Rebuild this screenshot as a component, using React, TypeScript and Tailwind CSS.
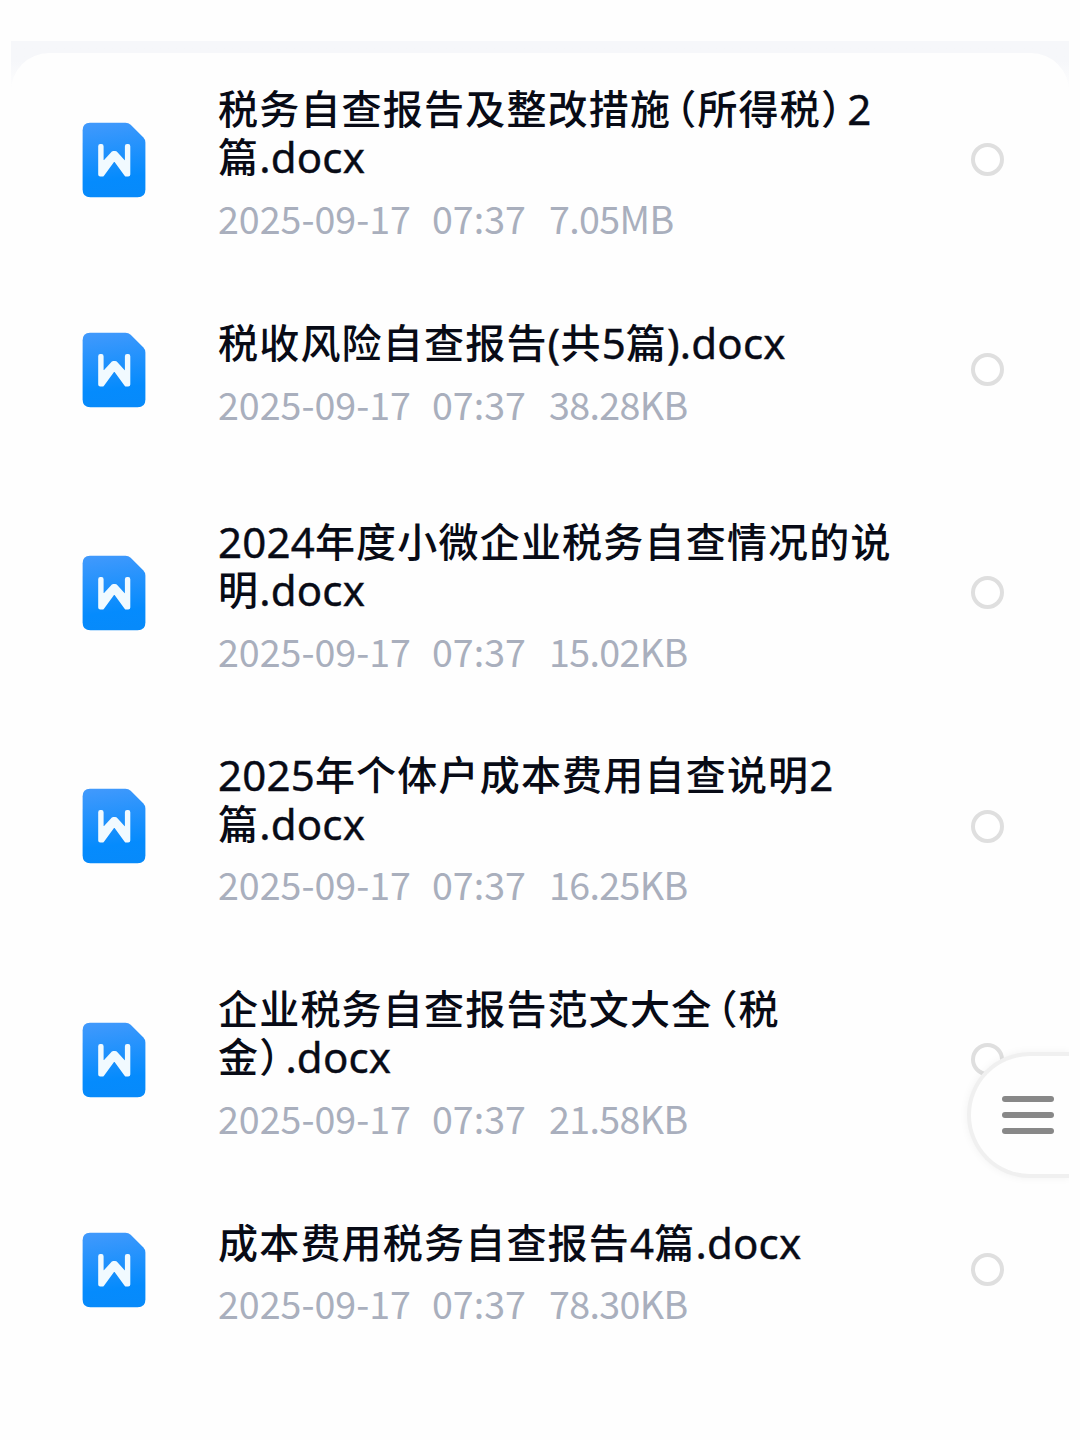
import { clsx } from 'clsx';

type FileItem = {
    lines: string[];
    date: string;
    time: string;
    size: string;
    className?: string;
};

const files: FileItem[] = [
    { lines: ['税务自查报告及整改措施（所得税）2', '篇.docx'], date: '2025-09-17', time: '07:37', size: '7.05MB' },
    { lines: ['税收风险自查报告(共5篇).docx'], date: '2025-09-17', time: '07:37', size: '38.28KB' },
    { lines: ['2024年度小微企业税务自查情况的说', '明.docx'], date: '2025-09-17', time: '07:37', size: '15.02KB', className: 'mt-[13px]' },
    { lines: ['2025年个体户成本费用自查说明2', '篇.docx'], date: '2025-09-17', time: '07:37', size: '16.25KB' },
    { lines: ['企业税务自查报告范文大全（税', '金）.docx'], date: '2025-09-17', time: '07:37', size: '21.58KB' },
    { lines: ['成本费用税务自查报告4篇.docx'], date: '2025-09-17', time: '07:37', size: '78.30KB' },
];

// Brackets use their half-width form, latin runs get their own size
function TitleLine({ text }: { text: string }) {
    const parts = text.match(/[（）]|[\x21-\x7e]+|[^（）\x21-\x7e]+/g) ?? [];

    return (
        <div className="flex h-[48.5px] leading-[48.5px] whitespace-nowrap">
            {parts.map((part, i) => (
                <span
                    key={i}
                    className={clsx(
                        part === '（' && "ml-[5px] [font-feature-settings:'halt']",
                        part === '）' && "mr-[5px] [font-feature-settings:'halt']",
                        /^[\x21-\x7e]/.test(part)
                            ? "pt-[2px] font-['Noto_Sans','Noto_Sans_CJK_SC',sans-serif] font-normal text-[42px] tracking-[0.2px] [-webkit-text-stroke:0.4px_#080b16]"
                            : "font-['Noto_Sans_CJK_SC',sans-serif] text-[40px] tracking-[1.2px]"
                    )}
                >
                    {part}
                </span>
            ))}
        </div>
    );
}

function WordIcon() {
    return (
        <svg className="w-16 h-[76px] shrink-0" viewBox="0 0 64 76" fill="none">
            <defs>
                <linearGradient id="doc" x1="24" y1="0" x2="34" y2="76" gradientUnits="userSpaceOnUse">
                    <stop stopColor="#4099fc" />
                    <stop offset="0.75" stopColor="#058bfd" />
                    <stop offset="1" stopColor="#078afa" />
                </linearGradient>
            </defs>
            <path
                d="M8 .7H43.5Q46.5.7 48.7 2.8L61.2 15.2Q63.4 17.4 63.4 20.5V67.5Q63.4 75.3 55.6 75.3H8.4Q.6 75.3.6 67.5V8.5Q.6.7 8 .7Z"
                fill="url(#doc)"
            />
            <path
                d="M18.3 24.2V52.5H20.3L32.3 36L44.3 52.5H46.2V24.2H45V44L33.2 31H31.4L19.5 44V24.2Z"
                fill="#f1faff"
                stroke="#f1faff"
                strokeWidth="4.2"
                strokeLinejoin="round"
            />
        </svg>
    );
}

function FileRow({ file }: { file: FileItem }) {
    return (
        <li className={clsx('flex items-center pl-[82px] pr-[76px]', file.lines.length > 1 ? 'h-[233.3px]' : 'h-[187px]', file.className)}>
            <WordIcon />
            <div className="flex-1 ml-[72px] -mt-[3px] flex flex-col gap-[23px]">
                <div className="font-medium text-[#080b16]">
                    {file.lines.map((line) => (
                        <TitleLine key={line} text={line} />
                    ))}
                </div>
                <div className="flex h-[31px] leading-[30px] font-['Noto_Sans_CJK_SC',sans-serif] text-[37.6px] text-[#a9afbd] whitespace-nowrap">
                    <span className="w-[214px]">{file.date}</span>
                    <span className="w-[117px]">{file.time}</span>
                    <span className="tracking-[-0.6px]">{file.size}</span>
                </div>
            </div>
            <span className="size-[33px] shrink-0 rounded-full border-4 border-[#dfdfdf] bg-white" />
        </li>
    );
}

export default function App() {
    return (
        <div className="relative w-[1080px] h-[1440px] overflow-hidden bg-[#fefefe]">
            <div className="pt-[41px]">
                <div className="mx-[11px] h-[50px] pt-3 bg-linear-to-b from-[#f6f7fa] from-40% to-[#fefefe]">
                    <div className="h-[38px] rounded-t-[44px] bg-[#fefefe]" />
                </div>
                <ul className="-mt-[48px]">
                    {files.map((file) => (
                        <FileRow key={file.lines[0]} file={file} />
                    ))}
                </ul>
            </div>

            {/* floating menu handle */}
            <div className="absolute right-[11px] top-[1035px] h-[160px] w-[120px] overflow-hidden">
                <button
                    className="absolute right-0 top-[17px] h-[126px] w-[102px] rounded-l-full border-4 border-r-0 border-[#f0f0f0] bg-[#fefefe] shadow-[0_0_8px_rgba(0,0,0,0.05)] flex flex-col justify-center gap-[10px] pl-[31px]"
                    aria-label="菜单"
                >
                    <span className="h-[6px] w-[52px] rounded-full bg-[#888888]" />
                    <span className="h-[6px] w-[52px] rounded-full bg-[#888888]" />
                    <span className="h-[6px] w-[52px] rounded-full bg-[#888888]" />
                </button>
            </div>
        </div>
    );
}
